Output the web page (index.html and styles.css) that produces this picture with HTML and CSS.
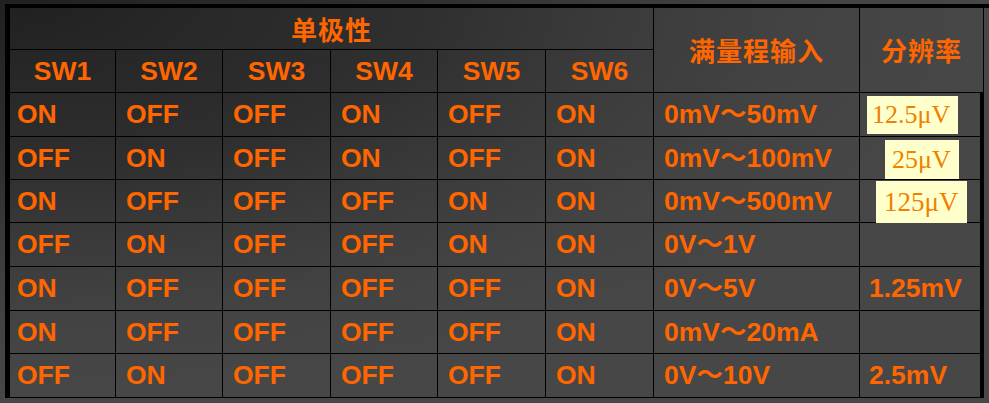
FILE: index.html
```html
<!DOCTYPE html>
<html lang="zh">
<head>
<meta charset="utf-8">
<title>单极性</title>
<link rel="stylesheet" href="styles.css">
</head>
<body>
<div class="sheet">
  <div class="grid">
    <div class="cell head span6 cjk">单极性</div>
    <div class="cell head tall col7 cjk">满量程输入</div>
    <div class="cell head tall col8 cjk">分辨率</div>
    <div class="cell head">SW1</div>
    <div class="cell head">SW2</div>
    <div class="cell head">SW3</div>
    <div class="cell head">SW4</div>
    <div class="cell head">SW5</div>
    <div class="cell head">SW6</div>

    <div class="cell first">ON</div><div class="cell">OFF</div><div class="cell">OFF</div><div class="cell">ON</div><div class="cell">OFF</div><div class="cell">ON</div><div class="cell">0mV～50mV</div><div class="cell end flush"><span class="hl hl-a">12.5μV</span></div>

    <div class="cell first">OFF</div><div class="cell">ON</div><div class="cell">OFF</div><div class="cell">ON</div><div class="cell">OFF</div><div class="cell">ON</div><div class="cell">0mV～100mV</div><div class="cell end flush"><span class="hl hl-b">25μV</span></div>

    <div class="cell first">ON</div><div class="cell">OFF</div><div class="cell">OFF</div><div class="cell">OFF</div><div class="cell">ON</div><div class="cell">ON</div><div class="cell">0mV～500mV</div><div class="cell end flush"><span class="hl hl-c">125μV</span></div>

    <div class="cell first">OFF</div><div class="cell">ON</div><div class="cell">OFF</div><div class="cell">OFF</div><div class="cell">ON</div><div class="cell">ON</div><div class="cell">0V～1V</div><div class="cell end"></div>

    <div class="cell first">ON</div><div class="cell">OFF</div><div class="cell">OFF</div><div class="cell">OFF</div><div class="cell">OFF</div><div class="cell">ON</div><div class="cell">0V～5V</div><div class="cell end">1.25mV</div>

    <div class="cell first">ON</div><div class="cell">OFF</div><div class="cell">OFF</div><div class="cell">OFF</div><div class="cell">OFF</div><div class="cell">ON</div><div class="cell">0mV～20mA</div><div class="cell end"></div>

    <div class="cell first">OFF</div><div class="cell">ON</div><div class="cell">OFF</div><div class="cell">OFF</div><div class="cell">OFF</div><div class="cell">ON</div><div class="cell">0V～10V</div><div class="cell end">2.5mV</div>
  </div>
</div>
</body>
</html>
```

FILE: styles.css
```css
html, body {
  margin: 0;
  padding: 0;
  width: 989px;
  height: 403px;
  overflow: hidden;
}

body {
  background:
    radial-gradient(ellipse 1000px 400px at 0 0,
      #202020 0%,
      #282828 20%,
      #2f2f2f 42%,
      #3b3b3b 62%,
      #434343 80%,
      #474747 100%);
  background-color: #474747;
  font-family: "Liberation Sans", Arial, "Noto Sans CJK SC", sans-serif;
  font-weight: 700;
  font-size: 26.5px;
  color: #ff6600;
}

.sheet {
  padding: 4px 0 0 5px;
}

.grid {
  display: grid;
  grid-template-columns: 106px 107px 108px 107px 108px 108px 206px 124px;
  grid-template-rows: 42px 43px 44px 43px 43px 44px 44px 43px 44px;
  width: 979px;
  border-left: 5px solid #000;
  border-top: 4px solid #000;
  box-sizing: content-box;
}

.cell {
  box-sizing: border-box;
  border-right: 1px solid #000;
  border-bottom: 1px solid #000;
  display: flex;
  align-items: center;
  padding-left: 10px;
  white-space: nowrap;
  line-height: 1;
}

.cell.first {
  padding-left: 7px;
}

.cell.end {
  border-right: 4px solid #000;
  padding-left: 9px;
}

.cell.flush {
  padding-left: 0;
}

.head {
  justify-content: center;
  padding-left: 0;
}

.span6 {
  grid-column: 1 / span 6;
  grid-row: 1;
}

.tall {
  grid-row: 1 / span 2;
}

.col7 {
  grid-column: 7;
}

.col8 {
  grid-column: 8;
}

.cjk {
  font-family: "Noto Sans CJK SC", sans-serif;
  font-weight: 700;
  font-size: 26px;
  letter-spacing: 1px;
}

.hl {
  display: inline-flex;
  align-items: center;
  background: #ffffcc;
  color: #f08000;
  font-family: "Liberation Serif", "Times New Roman", serif;
  font-weight: 400;
  font-size: 26px;
  height: 38px;
  box-sizing: border-box;
}

.hl-a {
  margin-left: 7px;
  padding: 0 8px 0 5px;
  width: 91px;
  margin-top: 1px;
}

.hl-b {
  margin-left: 25px;
  padding: 0 7px;
  width: 74px;
  height: 39px;
  margin-top: 3px;
}

.hl-c {
  margin-left: 16px;
  padding: 0 8px;
  width: 91px;
  height: 42px;
  font-size: 27px;
  margin-top: 2px;
}
```
